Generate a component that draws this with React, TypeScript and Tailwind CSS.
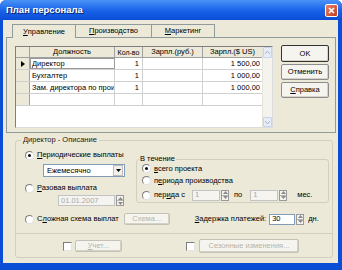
import React from "react";

function U({ c }: { c: string }) {
  return <span className="underline underline-offset-[1px]">{c}</span>;
}

function Radio({ checked, children }: { checked?: boolean; children: React.ReactNode }) {
  return (
    <div className="flex items-center gap-[3px]">
      <span className="w-[9px] h-[9px] rounded-full border border-t-[#7d7d7d] border-l-[#7d7d7d] border-r-[#e0e0e0] border-b-[#e0e0e0] bg-white flex items-center justify-center shrink-0">
        {checked && <span className="w-[3px] h-[3px] rounded-full bg-[#111]" />}
      </span>
      <span className="whitespace-nowrap">{children}</span>
    </div>
  );
}

function Check() {
  return (
    <span className="block w-[9px] h-[9px] border border-t-[#7d7d7d] border-l-[#7d7d7d] border-r-[#e4e4e4] border-b-[#e4e4e4] bg-white shrink-0" />
  );
}

function Spin({ h }: { h: string }) {
  return (
    <div className={`flex flex-col w-[8px] ${h} border border-[#9a9a9a] bg-[#f3f2ec]`}>
      <div className="flex-1 flex items-center justify-center border-b border-[#b5b5b5]">
        <svg width="5" height="3" viewBox="0 0 5 3"><path d="M0 3 L2.5 0 L5 3Z" fill="#8a8a8a" /></svg>
      </div>
      <div className="flex-1 flex items-center justify-center">
        <svg width="5" height="3" viewBox="0 0 5 3"><path d="M0 0 L2.5 3 L5 0Z" fill="#8a8a8a" /></svg>
      </div>
    </div>
  );
}

function Btn({ children, w, h, def, dis }: { children: React.ReactNode; w: string; h: string; def?: boolean; dis?: boolean }) {
  const cls = def
    ? "border-[#333] text-black"
    : dis
    ? "border-[#c4c2b6] text-[#b7b4a6]"
    : "border-[#8c8c8c] text-black";
  return (
    <div className={`${w} ${h} border ${cls} rounded-[2px] bg-[#f5f4ef] flex items-center justify-center whitespace-nowrap shadow-[inset_-1px_-1px_0_#d6d3c6]`}>
      {children}
    </div>
  );
}

const rows = [
  { name: "Директор", n: "1", usd: "1 500,00", sel: true },
  { name: "Бухгалтер", n: "1", usd: "1 000,00" },
  { name: "Зам. директора по прои:", n: "1", usd: "1 000,00" },
];

export default function App() {
  return (
    <div className="w-[342px] h-[270px] bg-[#0b4ed6] flex flex-col font-['Liberation_Sans',sans-serif] text-[7.5px] leading-none text-black overflow-hidden rounded-t-[6px]">
      {/* title bar */}
      <div className="h-[20px] shrink-0 bg-gradient-to-b from-[#4a93f8] via-[#1a64ea] to-[#0a4cd6] flex items-center pl-[6px] pr-[4px]">
        <span className="text-white font-bold text-[9.5px] flex-1 [text-shadow:1px_1px_0_#0a246a]">План персонала</span>
        <div className="w-[13px] h-[13px] rounded-[2px] border border-white bg-gradient-to-br from-[#e8806a] to-[#c43b18] flex items-center justify-center">
          <svg width="7" height="7" viewBox="0 0 7 7"><path d="M1 1 L6 6 M6 1 L1 6" stroke="white" strokeWidth="1.6" /></svg>
        </div>
      </div>
      {/* body */}
      <div className="ml-[3px] mr-[4px] mb-[7px] flex-1 bg-[#ece9d8] flex flex-col">
        {/* tabs */}
        <div className="flex pl-[9px] mt-[4px] h-[13px] items-end">
          <div className="w-[64px] h-[14px] border border-b-0 border-[#919b9c] bg-[#ece9d8] flex items-center justify-center -mb-px relative z-10">
            <U c="У" />правление
          </div>
          <div className="w-[76px] h-[13px] border-t border-r border-[#919b9c] flex items-center justify-center">
            <U c="П" />роизводство
          </div>
          <div className="w-[63px] h-[13px] border-t border-r border-[#919b9c] flex items-center justify-center">
            <U c="М" />аркетинг
          </div>
        </div>
        <div className="ml-[3px] mr-[2px] h-[96px] border border-[#919b9c] flex pt-[8px] pl-[8px]">
          {/* grid */}
          <div className="w-[258px] h-[82px] border border-t-[#7f7f7f] border-l-[#7f7f7f] border-r-[#dcdcdc] border-b-[#dcdcdc] bg-white flex">
            <div className="flex-1 flex flex-col">
              <div className="flex h-[11px] bg-[#ece9d8] border-b border-[#a0a0a0]">
                <div className="w-[14px] border-r border-[#a0a0a0]" />
                <div className="w-[85px] border-r border-[#a0a0a0] flex items-center justify-center">Должность</div>
                <div className="w-[28px] border-r border-[#a0a0a0] flex items-center justify-center text-[7px]">Кол-во</div>
                <div className="w-[60px] border-r border-[#a0a0a0] flex items-center justify-center">Зарпл.(руб.)</div>
                <div className="flex-1 flex items-center justify-center">Зарпл.($ US)</div>
              </div>
              {rows.map((r) => (
                <div key={r.name} className="flex h-[12px] border-b border-[#d0d0d0]">
                  <div className="w-[14px] bg-[#ece9d8] border-r border-[#a0a0a0] flex items-center justify-center">
                    {r.sel && <svg width="4" height="6" viewBox="0 0 4 6"><path d="M0 0 L4 3 L0 6Z" fill="#000" /></svg>}
                  </div>
                  <div className={`w-[85px] border-r border-[#d0d0d0] flex items-center pl-[2px] whitespace-nowrap overflow-hidden ${r.sel ? "outline outline-1 outline-[#9a9a9a] -outline-offset-1" : ""}`}>{r.name}</div>
                  <div className="w-[28px] border-r border-[#d0d0d0] flex items-center justify-end pr-[3px]">{r.n}</div>
                  <div className="w-[60px] border-r border-[#d0d0d0] flex items-center" />
                  <div className="flex-1 flex items-center justify-end pr-[2px]">{r.usd}</div>
                </div>
              ))}
              <div className="flex h-[12px] border-b border-[#d0d0d0]">
                <div className="w-[14px] bg-[#ece9d8] border-r border-[#a0a0a0]" />
                <div className="w-[85px] border-r border-[#d0d0d0]" />
                <div className="w-[28px] border-r border-[#d0d0d0]" />
                <div className="w-[60px] border-r border-[#d0d0d0]" />
                <div className="flex-1" />
              </div>
            </div>
            {/* scrollbar */}
            <div className="w-[10px] bg-[#f4f3ee] flex flex-col justify-between border-l border-[#e6e4da]">
              <div className="h-[11px] bg-[#e6ecf8] border border-[#c9d3ea] rounded-[1px] flex items-center justify-center">
                <svg width="5" height="3" viewBox="0 0 5 3"><path d="M0 3 L2.5 0 L5 3" stroke="#a7b4d2" fill="none" /></svg>
              </div>
              <div className="h-[10px] bg-[#e6ecf8] border border-[#c9d3ea] rounded-[1px] flex items-center justify-center">
                <svg width="5" height="3" viewBox="0 0 5 3"><path d="M0 0 L2.5 3 L5 0" stroke="#a7b4d2" fill="none" /></svg>
              </div>
            </div>
          </div>
          {/* buttons */}
          <div className="ml-[8px] flex flex-col gap-[2px] -mt-[1px]">
            <Btn w="w-[48px]" h="h-[17px]" def>OK</Btn>
            <Btn w="w-[48px]" h="h-[16px]">Отменить</Btn>
            <Btn w="w-[48px]" h="h-[16px]"><U c="С" />правка</Btn>
          </div>
        </div>

        {/* group box */}
        <div className="relative mt-[7px] ml-[12px] w-[318px] h-[118px] border border-[#d0d0bf] rounded-[3px] flex flex-col">
          <span className="absolute -top-[5px] left-[5px] bg-[#ece9d8] px-[2px] text-[#1a1a1a]">Директор - Описание</span>
          <div className="flex">
            {/* left column */}
            <div className="w-[120px] flex flex-col pl-[9px] pt-[9px]">
              <div className="h-[10px] flex items-center">
                <Radio checked><U c="П" />ериодические выплаты</Radio>
              </div>
              <div className="ml-[18px] mt-[4px] w-[82px] h-[13px] border border-[#7f9db9] bg-white flex items-center">
                <span className="flex-1 pl-[3px]">Ежемесячно</span>
                <div className="w-[10px] h-[11px] mr-px bg-[#f1f0ea] border border-[#bdbdbd] flex items-center justify-center">
                  <svg width="5" height="3" viewBox="0 0 5 3"><path d="M0 0 L2.5 3 L5 0Z" fill="#000" /></svg>
                </div>
              </div>
              <div className="h-[10px] mt-[6px] flex items-center">
                <Radio><U c="Р" />азовая выплата</Radio>
              </div>
              <div className="ml-[33px] mt-[2px] flex items-center gap-[1px]">
                <div className="w-[57px] h-[11px] border border-[#c3c3c3] bg-[#f5f4f0] text-[#a8a8a8] flex items-center pl-[2px]">01.01.2007</div>
                <Spin h="h-[11px]" />
              </div>
            </div>
            {/* inner group */}
            <div className="relative mt-[18px] w-[193px] h-[44px] border border-[#d0d0bf] rounded-[3px] flex flex-col pl-[5px] pt-[4px]">
              <span className="absolute -top-[5px] left-[2px] bg-[#ece9d8] px-px">В течение</span>
              <div className="h-[9px] flex items-center">
                <Radio checked><U c="в" />сего проекта</Radio>
              </div>
              <div className="h-[9px] mt-[3px] flex items-center">
                <Radio>п<U c="е" />риода производства</Radio>
              </div>
              <div className="h-[12px] mt-[4px] flex items-center">
                <Radio>пер<U c="и" />да с</Radio>
                <div className="ml-[7px] w-[28px] h-[11px] border border-[#c3c3c3] bg-[#f5f4f0] text-[#a8a8a8] flex items-center pl-[2px]">1</div>
                <div className="ml-px"><Spin h="h-[11px]" /></div>
                <span className="ml-[5px]">по</span>
                <div className="ml-[8px] w-[28px] h-[11px] border border-[#c3c3c3] bg-[#f5f4f0] text-[#a8a8a8] flex items-center pl-[2px]">1</div>
                <div className="ml-px"><Spin h="h-[11px]" /></div>
                <span className="ml-[10px]">мес.</span>
              </div>
            </div>
          </div>
          {/* third row */}
          <div className="flex items-center mt-[7px] h-[12px] pl-[9px]">
            <Radio>С<U c="л" />ожная схема выплат</Radio>
            <div className="ml-[5px]"><Btn w="w-[46px]" h="h-[12px]" dis>Схема...</Btn></div>
            <span className="ml-[25px] whitespace-nowrap"><U c="З" />адержка платежей:</span>
            <div className="ml-[3px] w-[26px] h-[11px] border border-[#7f9db9] bg-white flex items-center pl-[2px]">30</div>
            <div className="ml-px"><Spin h="h-[11px]" /></div>
            <span className="ml-[4px]">дн.</span>
          </div>
          <div className="mt-[8px] border-t border-[#d0d0bf]" />
          <div className="flex items-center mt-[5px] h-[14px]">
            <div className="ml-[47px]"><Check /></div>
            <div className="ml-[3px]"><Btn w="w-[47px]" h="h-[12px]" dis><U c="У" />чет...</Btn></div>
            <div className="ml-[64px]"><Check /></div>
            <div className="ml-[4px]"><Btn w="w-[100px]" h="h-[14px]" dis>Сезонные изменения...</Btn></div>
          </div>
        </div>
      </div>
    </div>
  );
}
